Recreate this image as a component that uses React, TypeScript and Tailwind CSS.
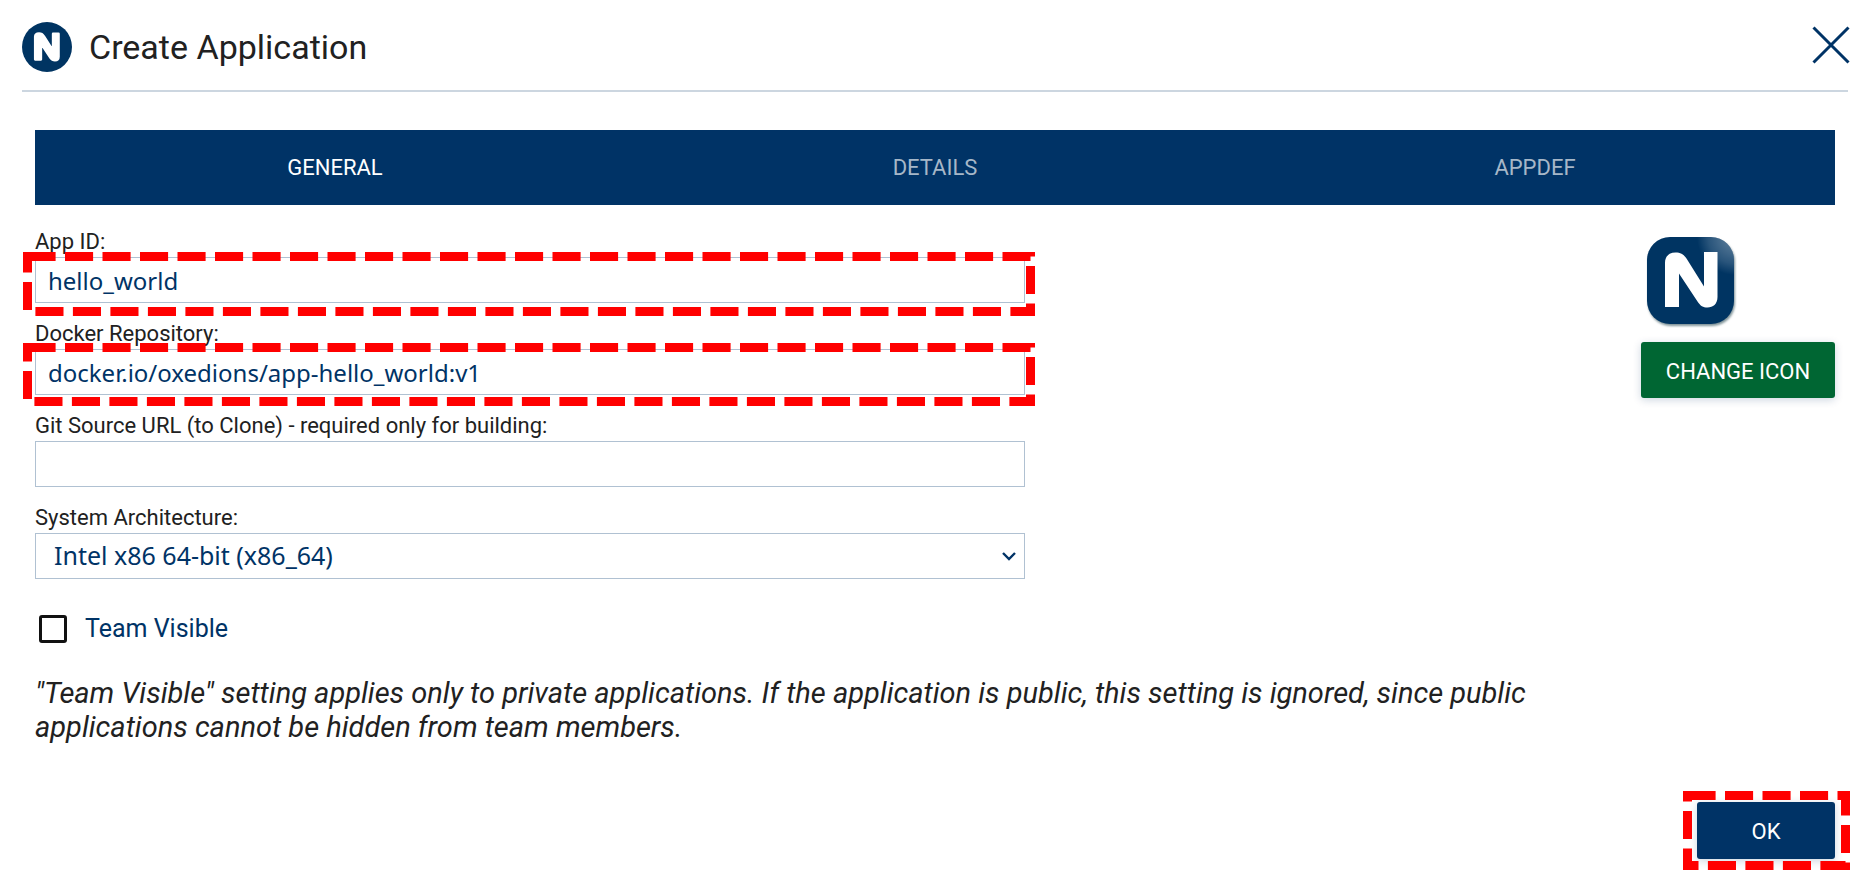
import { ReactNode, useState } from "react";

const TABS = ["GENERAL", "DETAILS", "APPDEF"];

function RoundLogo() {
  return (
    <svg viewBox="0 0 88 88" className="size-[50px] shrink-0" aria-hidden="true">
      <circle cx="44" cy="44" r="44" fill="#003462" />
      <path
        fill="#fff"
        stroke="#fff"
        strokeWidth="4"
        strokeLinejoin="round"
        d="M23 66V26C23 20.500 27 20 30 20C34 20 36.500 21.500 38.500 25L54.500 50V20.500H64.500V61C64.500 65.500 62 67.500 58 67.500C54 67.500 52 66 50 63L33.500 38V66Z"
      />
    </svg>
  );
}

function AppIcon() {
  return (
    <svg viewBox="0 0 88 88" className="size-[88px] overflow-visible drop-shadow-[1px_2px_1px_rgba(0,40,50,0.5)]" role="img" aria-label="Application icon">
      <defs>
        <radialGradient id="shine" gradientUnits="userSpaceOnUse" cx="88" cy="0" r="38">
          <stop offset="0" stopColor="#fff" stopOpacity="0.4" />
          <stop offset="0.7" stopColor="#fff" stopOpacity="0.16" />
          <stop offset="1" stopColor="#fff" stopOpacity="0" />
        </radialGradient>
      </defs>
      <rect width="87" height="87" rx="23" fill="#003462" />
      <rect width="87" height="87" rx="23" fill="url(#shine)" />
      <path
        fill="#fff"
        d="M18 70V26C18 19 22.500 15.500 28.500 15.500C33.500 15.500 36.500 17 39.500 21.500L57 49.500V15H70.500V60C70.500 67 66 70.500 60.500 70.500C56 70.500 53.500 69 50.500 64.500L32 36.500V70Z"
      />
    </svg>
  );
}

function Highlight({ className }: { className: string }) {
  return (
    <svg className={`pointer-events-none absolute ${className}`} aria-hidden="true">
      <rect
        x="4.5"
        y="4.5"
        className="h-[calc(100%-9px)] w-[calc(100%-9px)]"
        fill="none"
        stroke="#f00"
        strokeWidth="9"
        strokeDasharray="28.1 9.4"
      />
    </svg>
  );
}

function Field({ id, label, children }: { id: string; label: string; children: ReactNode }) {
  return (
    <div className="flex flex-col">
      <label htmlFor={id} className="text-[22px] leading-[30px] text-[#212121]">
        {label}
      </label>
      <div className="relative">{children}</div>
    </div>
  );
}

export default function App() {
  const [tab, setTab] = useState(0);
  const box =
    "block h-[46px] w-full appearance-none border border-[#b0c1d2] bg-white font-['Noto_Sans',sans-serif] text-[#003366] outline-none";

  return (
    <main className="flex min-h-screen flex-col bg-white pt-[22px] pr-5 pb-8 pl-[22px] font-['Roboto',sans-serif] text-[#212121]">
      <header className="flex items-center justify-between border-b-2 border-[#ccd6e0] pb-[18px]">
        <div className="flex items-center gap-[17px]">
          <RoundLogo />
          <h1 className="text-[34px] leading-[50px]">Create Application</h1>
        </div>
        <button type="button" aria-label="Close" className="-mt-1 -mr-0.5">
          <svg viewBox="0 0 38 38" className="size-[38px]" fill="none" stroke="#003366" strokeWidth="3">
            <path d="M1.500 1.500 36.500 36.500M36.500 1.500 1.500 36.500" />
          </svg>
        </button>
      </header>

      <section className="px-[13px] pt-[38px]">
        <div role="tablist" className="grid h-[75px] grid-cols-3 bg-[#003366]">
          {TABS.map((name, i) => (
            <button
              key={name}
              type="button"
              role="tab"
              aria-selected={tab === i}
              onClick={() => setTab(i)}
              className={`text-[22px] ${tab === i ? "text-white" : "text-[#a6b7c8]"}`}
            >
              {name}
            </button>
          ))}
        </div>

        <form className="pt-[22px]" onSubmit={(e) => e.preventDefault()}>
          <div className="flex items-start justify-between">
            <div className="flex w-[55%] flex-col gap-4">
              <Field id="app-id" label="App ID:">
                <input id="app-id" className={`${box} px-3 text-[24px]`} defaultValue="hello_world" />
                <Highlight className="-top-[5px] -left-3 h-16 w-[calc(100%+22px)]" />
              </Field>
              <Field id="repo" label="Docker Repository:">
                <input id="repo" className={`${box} px-3 text-[24px]`} defaultValue="docker.io/oxedions/app-hello_world:v1" />
                <Highlight className="-top-1.5 -left-3 h-[63px] w-[calc(100%+22px)]" />
              </Field>
              <Field id="git" label="Git Source URL (to Clone) - required only for building:">
                <input id="git" className={`${box} px-3 text-[24px]`} />
              </Field>
              <Field id="arch" label="System Architecture:">
                <select id="arch" className={`${box} px-[18px] text-[25px]`}>
                  <option>Intel x86 64-bit (x86_64)</option>
                </select>
                <svg
                  viewBox="0 0 14 9"
                  className="pointer-events-none absolute top-[19px] right-[9px] h-[9px] w-[14px]"
                  fill="none"
                  stroke="#003366"
                  strokeWidth="2.4"
                  aria-hidden="true"
                >
                  <path d="M1 1l6 6 6-6" />
                </svg>
              </Field>
            </div>
            <div className="flex flex-col pt-2.5">
              <div className="pl-1.5">
                <AppIcon />
              </div>
              <button
                type="button"
                className="mt-[17px] h-14 w-[194px] rounded-[3px] bg-[#006633] pt-0.5 text-[22px] text-white shadow-[0_2px_8px_rgba(0,51,102,0.2)]"
              >
                CHANGE ICON
              </button>
            </div>
          </div>

          <label className="mt-[35px] flex w-fit items-center gap-[18px] pl-1 text-[25px] leading-[30px] text-[#003366]">
            <input type="checkbox" className="size-7 appearance-none rounded-[3px] border-3 border-[#111] bg-white checked:bg-[#003366]" />
            Team Visible
          </label>

          <p className="mt-8 max-w-[1520px] text-[29px] leading-[34px] italic">
            "Team Visible" setting applies only to private applications. If the application is public, this setting is
            ignored, since public applications cannot be hidden from team members.
          </p>

          <div className="mt-[58px] flex justify-end">
            <div className="relative">
              <button
                type="submit"
                className="block h-[57px] w-[138px] rounded-[3px] bg-[#003366] pt-0.5 text-[22px] text-white shadow-[0_2px_8px_rgba(0,51,102,0.2)]"
              >
                OK
              </button>
              <Highlight className="-top-[11px] -left-3.5 h-[79px] w-[167px]" />
            </div>
          </div>
        </form>
      </section>
    </main>
  );
}
